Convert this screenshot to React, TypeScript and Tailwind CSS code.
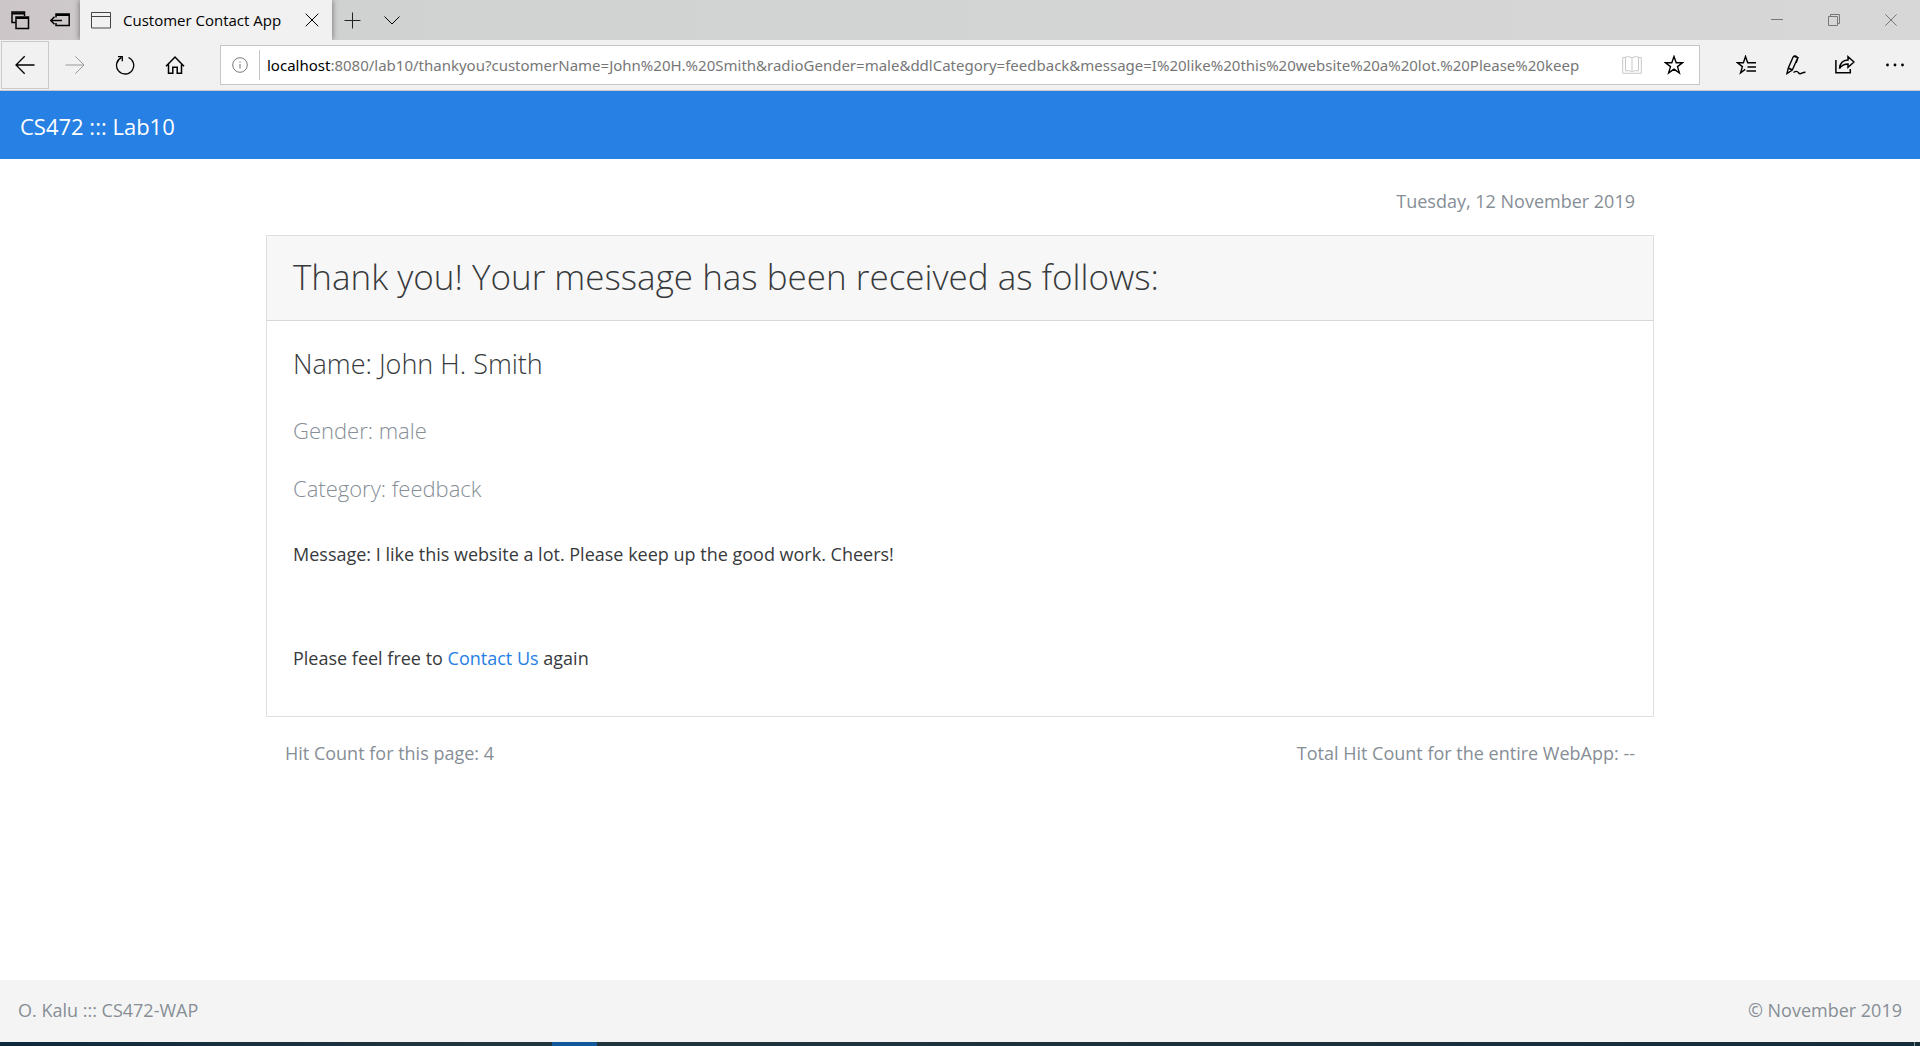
import type { ReactNode } from "react";

const query =
  ":8080/lab10/thankyou?customerName=John%20H.%20Smith&radioGender=male&ddlCategory=feedback&message=I%20like%20this%20website%20a%20lot.%20Please%20keep";

type IconProps = { size?: number; width?: number; className?: string; children: ReactNode };

function Icon({ size = 20, width = 1, className = "", children }: IconProps) {
  return (
    <svg
      aria-hidden="true"
      width={size}
      height={size}
      viewBox={`0 0 ${size} ${size}`}
      fill="none"
      stroke="currentColor"
      strokeWidth={width}
      className={`shrink-0 ${className}`}
    >
      {children}
    </svg>
  );
}

function ToolButton({ label, className = "", children }: { label: string; className?: string; children: ReactNode }) {
  return (
    <button type="button" aria-label={label} className={`flex shrink-0 items-center justify-center ${className}`}>
      {children}
    </button>
  );
}

function TabStrip() {
  return (
    <div className="flex h-10 items-stretch bg-linear-to-r from-[#cdc6c9] via-[#d0d1d1] via-15% to-[#d7d7d7] text-black">
      <ToolButton label="Tabs you've set aside" className="w-10">
        <Icon width={2}>
          <path d="M6 12.5H2V2h12.5v4" strokeWidth="1.5" />
          <path d="M2 3.5h12.5" />
          <path d="M6 7h12.5v11.5H6z" strokeWidth="1.5" />
          <path d="M6 8h12.5" />
        </Icon>
      </ToolButton>
      <ToolButton label="Set these tabs aside" className="w-10">
        <Icon width={1.5}>
          <path d="M6 7.5V4h13.2v11.5H6V13" />
          <path d="M6 5h13.2" strokeWidth="2" />
          <path d="M.7 10.5H12M4.5 6.7L.7 10.5l3.8 3.8" />
        </Icon>
      </ToolButton>
      <div className="flex w-[252px] items-center bg-[#f1f1f1] pl-[11px] shadow-[0_0_6px_rgba(0,0,0,0.5)] [clip-path:inset(0_-8px_0_-8px)]">
        <Icon className="text-[#444]">
          <path d="M.5 2.5h19V18H.5zM.5 6.5h19" />
        </Icon>
        <span className="flex-1 pl-3 text-[15px] whitespace-nowrap">Customer Contact App</span>
        <ToolButton label="Close tab" className="w-10">
          <Icon size={14}>
            <path d="M.7.7l12.6 12.6M13.3.7L.7 13.3" />
          </Icon>
        </ToolButton>
      </div>
      <ToolButton label="New tab" className="w-10">
        <Icon size={17} className="text-[#222]">
          <path d="M8.5.5v16M.5 8.5h16" />
        </Icon>
      </ToolButton>
      <ToolButton label="Show tab previews" className="w-10">
        <Icon size={16}>
          <path d="M.5 4.500L8 12l7.500-7.500" />
        </Icon>
      </ToolButton>
      <div className="mr-px ml-auto flex text-[#777]">
        <ToolButton label="Minimize" className="w-[57px]">
          <Icon size={12}>
            <path d="M0 5.500h12" />
          </Icon>
        </ToolButton>
        <ToolButton label="Restore" className="w-[57px]">
          <Icon size={12}>
            <path d="M.5 2.500h9v9h-9zM2.500 2.500v-2h9v9h-2" />
          </Icon>
        </ToolButton>
        <ToolButton label="Close" className="w-[57px]">
          <Icon size={12}>
            <path d="M.3.3l11.400 11.400M11.700.3L.3 11.700" />
          </Icon>
        </ToolButton>
      </div>
    </div>
  );
}

function AddressBar() {
  return (
    <div className="flex h-[51px] items-center border-b border-[#c8c8c8] bg-[#f1f1f1] text-black">
      <ToolButton label="Back" className="ml-px h-12 w-12 border border-[#c9c9c9]">
        <Icon width={1.3}>
          <path d="M1 10h18.500M9.700 1.300L1 10l8.700 8.700" />
        </Icon>
      </ToolButton>
      <ToolButton label="Forward" className="h-12 w-[51px] text-[#999]">
        <Icon>
          <path d="M.5 10H19M10.300 1.300L19 10l-8.700 8.700" />
        </Icon>
      </ToolButton>
      <ToolButton label="Refresh" className="h-12 w-[50px]">
        <Icon width={1.3}>
          <path d="M13.500 2.500a8.600 8.600 0 1 1-7.200.2M3 1.600h4.300v4.600" />
        </Icon>
      </ToolButton>
      <ToolButton label="Home" className="h-12 w-[50px]">
        <Icon width={1.5}>
          <path d="M1 11.200L10 2l9 9.200M3.500 9.500v8.700h4.300v-5.900h4.400v5.900h4.300V9.500" />
        </Icon>
      </ToolButton>
      <div className="ml-5 flex h-10 min-w-0 flex-1 items-center border border-[#c6c6c6] bg-white">
        <ToolButton label="View site information" className="w-[38px]">
          <Icon size={16} className="text-[#777]">
            <circle cx="8" cy="8" r="7.300" />
            <path d="M8 7v4.500M8 4.500v1.200" />
          </Icon>
        </ToolButton>
        <div className="flex h-[30px] min-w-0 flex-1 items-center border-l border-[#c6c6c6] pl-[7px] font-['Noto_Sans','Open_Sans',sans-serif] text-[15px]">
          <label htmlFor="address">localhost</label>
          <input
            id="address"
            type="text"
            defaultValue={query}
            spellCheck={false}
            className="min-w-0 flex-1 bg-transparent text-[#777] outline-none"
          />
        </div>
        <ToolButton label="Reading view" className="w-11 text-[#c8c8c8]">
          <Icon>
            <path d="M3.500 2.500H.7v15.800h18.600V2.500h-2.800" />
            <path d="M10 3c-1.500-1.500-4.500-1.500-6.500-1v14c2-.5 5-.5 6.500 1 1.500-1.500 4.500-1.500 6.500-1V2c-2-.5-5-.5-6.500 1zM10 3v14" />
          </Icon>
        </ToolButton>
        <ToolButton label="Add to favorites" className="mr-[5px] w-10">
          <Icon width={1.4}>
            <path d="M10 1.500l2.200 6.200h6.300l-5 3.900 1.900 6.300L10 14.100l-5.400 3.800 1.900-6.300-5-3.900h6.300z" />
          </Icon>
        </ToolButton>
      </div>
      <div className="ml-[21px] flex">
        <ToolButton label="Favorites, reading list and history" className="h-12 w-[50px]">
          <Icon width={1.4}>
            <path d="M9.200 14.400l-4.700 3.500 1.900-6.300-5-3.900h6L9.500 1.500l2.200 6.200h8.300M11.500 12h8.500M10.500 16h9.500" />
          </Icon>
        </ToolButton>
        <ToolButton label="Add notes" className="h-12 w-[49px]">
          <Icon width={1.4}>
            <path d="M1 18.500l1.300-5.500L7 2.300c.6-1.300 2-1.700 3-1.200 1.300.5 1.700 1.700 1.200 2.900L6.300 15 1 18.500zM2.300 13l4 2M8.500 1.500l3.500 1.200-1.800 5" />
            <path d="M7.500 17.500c1.500-1 3-1.500 4-.7 1.200.9 1.300 2 2.700 1.900 1.500-.1 2.500-1.600 5.300-1.500" />
          </Icon>
        </ToolButton>
        <ToolButton label="Share" className="h-12 w-[49px]">
          <Icon width={1.5}>
            <path d="M.9 5v12.700h14.400V14" />
            <path d="M4.500 13.500c.5-5.300 3.500-8.300 8.500-8.500V1.700l6 5.300-6 5.300V9C9 9 6.500 10.500 4.500 13.500z" />
          </Icon>
        </ToolButton>
        <ToolButton label="Settings and more" className="h-12 w-[51px]">
          <Icon>
            <g fill="currentColor" stroke="none">
              <circle cx="2.500" cy="10" r="1.400" />
              <circle cx="10" cy="10" r="1.400" />
              <circle cx="17.500" cy="10" r="1.400" />
            </g>
          </Icon>
        </ToolButton>
      </div>
    </div>
  );
}

export default function App() {
  return (
    <div className="flex min-h-screen flex-col bg-white font-['Open_Sans','Noto_Sans',sans-serif] text-[18px] leading-7 text-[#373a3c]">
      <TabStrip />
      <AddressBar />
      <header className="bg-[#2780e3] px-5 pt-[21px] pb-[19px] text-white">
        <a href="#" className="block text-[22px] leading-7">
          CS472 ::: Lab10
        </a>
      </header>
      <main className="mx-auto w-full max-w-[1388px] flex-1">
        <p className="px-[19px] pt-7 pb-5 text-right text-[#868e96]">Tuesday, 12 November 2019</p>
        <section className="border border-[#dfdfdf]">
          <div className="border-b border-[#d8d8d8] bg-[#f7f7f7] px-[26px] pt-[18px] pb-5">
            <h1 className="text-[35px] leading-[46px] font-light">
              Thank you! Your message has been received as follows:
            </h1>
          </div>
          <div className="px-[26px] pt-[23px] pb-11">
            <h2 className="text-[27px] leading-10 font-light">Name: John H. Smith</h2>
            <h3 className="mt-[30px] text-[22px] leading-8 font-light text-[#868e96]">Gender: male</h3>
            <h3 className="mt-[26px] text-[22px] leading-8 font-light text-[#868e96]">Category: feedback</h3>
            <p className="mt-9">Message: I like this website a lot. Please keep up the good work. Cheers!</p>
            <p className="mt-[76px]">
              Please feel free to{" "}
              <a href="#" className="text-[#2780e3]">
                Contact Us
              </a>{" "}
              again
            </p>
          </div>
        </section>
        <div className="flex justify-between px-[19px] pt-[22px] text-[#868e96]">
          <span>Hit Count for this page: 4</span>
          <span>Total Hit Count for the entire WebApp: --</span>
        </div>
      </main>
      <footer className="flex justify-between bg-[#f4f4f4] px-[18px] pt-4 pb-[18px] text-[#868e96]">
        <span>O. Kalu ::: CS472-WAP</span>
        <span>© November 2019</span>
      </footer>
      <div className="flex h-1 bg-linear-to-r from-[#0e2a3d] via-[#22343e] via-25% to-[#152c39]">
        <div className="ml-[552px] w-[45px] bg-[#12589a]" />
        <div className="mr-[5px] ml-auto w-px bg-[#8a979e]" />
      </div>
    </div>
  );
}
